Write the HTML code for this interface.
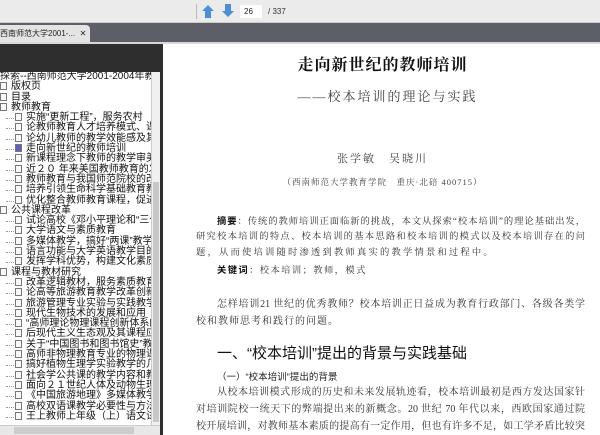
<!DOCTYPE html>
<html><head><meta charset="utf-8"><style>
*{margin:0;padding:0;box-sizing:border-box}
body{width:600px;height:435px;overflow:hidden;background:#fff;position:relative;font-family:"Liberation Sans","Noto Sans CJK SC",sans-serif}
.tb{position:absolute;left:0;top:0;width:600px;height:23px;background:#ebebeb;border-bottom:1px solid #ccc}
.sep{position:absolute;left:196px;top:4px;width:1px;height:15px;background:#bbb}
.pg{position:absolute;left:240px;top:5px;width:22px;height:13px;background:#fff;font-size:8px;line-height:13px;padding-left:4px;color:#222}
.tot{position:absolute;left:268px;top:5px;font-size:8px;line-height:13px;color:#333}
.bar{position:absolute;left:0;top:23px;width:600px;height:19px;background:#5e5e66}
.tab{position:absolute;left:0;top:25px;width:90px;height:18px;background:#e4e4e4;font-size:8px;line-height:18px;color:#222;white-space:nowrap;overflow:hidden;border-radius:0 4px 0 0}
.line{position:absolute;left:0;top:42px;width:600px;height:2px;background:#d8d8d8}
.lp{position:absolute;left:0;top:44px;width:163px;height:391px;background:#2e2e2e}
.col{position:absolute;left:150px;top:54px;width:7px;height:8px;background:#666}
.list{position:absolute;left:0;top:72px;width:160px;height:363px;background:#fff;overflow:hidden}
.vs{position:absolute;left:151px;top:72px;width:9px;height:354px;background:#f0f0f0;border-left:1px solid #ccc}
.hs{position:absolute;left:0;top:425px;width:160px;height:10px;background:#e8e8e8;border-top:1px solid #ccc}
.row{height:10.3px;font-size:10px;line-height:10.3px;white-space:nowrap;color:#111;position:relative}
.row i{display:inline-block;width:7px;height:8px;border:1px solid #777;background:#f8f8f8;margin-right:4px;vertical-align:-1px}
.c{padding-left:15px}
.c::before{content:"";position:absolute;left:6px;top:5px;width:8px;border-top:1px dotted #999}
.doc{position:absolute;left:165px;top:44px;width:435px;height:391px;font-family:"Liberation Serif","Noto Serif CJK SC",serif;color:#222}
.t{position:absolute;left:0;width:435px;text-align:center;white-space:nowrap}
.l{position:absolute;left:31px;width:389px;white-space:nowrap;text-align:justify;text-align-last:justify;color:#333;font-size:10px;height:14px;line-height:14px}
.l.in{left:52px;width:368px}
.s{font-size:9.3px}
b{font-family:"Liberation Sans","Noto Sans CJK SC",sans-serif;color:#111}
</style></head><body>
<div class="tb"><div class="sep"></div>
<svg style="position:absolute;left:201px;top:4px" width="14" height="15"><path d="M7 1 L13 7 L10 7 L10 14 L4 14 L4 7 L1 7 Z" fill="#4a8fd8"/></svg>
<svg style="position:absolute;left:221px;top:3px" width="14" height="15"><path d="M4 1 L10 1 L10 8 L13 8 L7 14 L1 8 L4 8 Z" fill="#4a8fd8"/></svg>
<div class="pg">26</div><div class="tot">/ 337</div></div>
<div class="bar"></div>
<div class="tab">西南师范大学2001-... &nbsp;✕</div>
<div class="line"></div>
<div class="lp"><div class="col"></div></div>
<div class="list">
<div class="row">探索--西南师范大学2001-2004年教学</div>
<div class="row"><i></i>版权页</div>
<div class="row"><i></i>目录</div>
<div class="row"><i></i>教师教育</div>
<div class="row c"><i></i>实施“更新工程”，服务农村</div>
<div class="row c"><i></i>论教师教育人才培养模式、课程</div>
<div class="row c"><i></i>论幼儿教师的教学效能感及其培</div>
<div class="row c"><i style="background:#6060c0"></i>走向新世纪的教师培训</div>
<div class="row c"><i></i>新课程理念下教师的教学审美能</div>
<div class="row c"><i></i>近２０ 年来美国教师教育的发</div>
<div class="row c"><i></i>教师教育与我国师范院校的改革</div>
<div class="row c"><i></i>培养引领生命科学基础教育教师</div>
<div class="row c"><i></i>优化整合教师教育课程，促进学</div>
<div class="row"><i></i>公共课程改革</div>
<div class="row c"><i></i>试论高校《邓小平理论和“三个</div>
<div class="row c"><i></i>大学语文与素质教育</div>
<div class="row c"><i></i>多媒体教学，搞好“两课”教学</div>
<div class="row c"><i></i>语言功能与大学英语教学目的的</div>
<div class="row c"><i></i>发挥学科优势，构建文化素质教</div>
<div class="row"><i></i>课程与教材研究</div>
<div class="row c"><i></i>改革逻辑教材，服务素质教育</div>
<div class="row c"><i></i>论高等旅游教育教学改革创新</div>
<div class="row c"><i></i>旅游管理专业实验与实践教学体</div>
<div class="row c"><i></i>现代生物技术的发展和应用</div>
<div class="row c"><i></i>“高师理论物理课程创新体系的</div>
<div class="row c"><i></i>后现代主义生态观及其课程应用</div>
<div class="row c"><i></i>关于“中国图书和图书馆史”教</div>
<div class="row c"><i></i>高师非物理教育专业的物理课程</div>
<div class="row c"><i></i>搞好植物生理学实验教学的几点</div>
<div class="row c"><i></i>社会学公共课的教学内容和教材</div>
<div class="row c"><i></i>面向２１世纪人体及动物生理学</div>
<div class="row c"><i></i>《中国旅游地理》多媒体教学软</div>
<div class="row c"><i></i>高校双语课教学必要性与方法论</div>
<div class="row c"><i></i>王上教师上年级（上）语文试验</div>
</div>
<div class="vs"><div style="position:absolute;left:1px;top:110px;width:6px;height:240px;background:#c8c8c8"></div></div>
<div class="hs"><div style="position:absolute;left:14px;top:1px;width:120px;height:7px;background:#ccc"></div></div>
<div class="doc">
<div class="t" style="top:8px;font-size:16px;font-weight:bold;color:#111;letter-spacing:1px">走向新世纪的教师培训</div>
<div class="t" style="top:42px;font-size:13px;color:#444;letter-spacing:2px;left:5px">——校本培训的理论与实践</div>
<div class="t" style="top:106px;font-size:11px;color:#444;letter-spacing:2px">张学敏　吴晓川</div>
<div class="t" style="top:132px;font-size:8.5px;color:#444;letter-spacing:1px">（西南师范大学教育学院　重庆·北碚 400715）</div>
<div class="l in s" style="top:170px"><b>摘要</b>：传统的教师培训正面临新的挑战，本文从探索“校本培训”的理论基础出发，</div>
<div class="l s" style="top:186px">研究校本培训的特点、校本培训的基本思路和校本培训的模式以及校本培训存在的问</div>
<div class="l s" style="top:202px;text-align-last:left;letter-spacing:2.2px">题，从而使培训随时渗透到教师真实的教学情景和过程中。</div>
<div class="l in s" style="top:219px;text-align-last:left;letter-spacing:1.4px"><b>关键词</b>：校本培训；教师，模式</div>
<div class="l in" style="top:254px">怎样培训21 世纪的优秀教师？校本培训正日益成为教育行政部门、各级各类学</div>
<div class="l" style="top:271px;text-align-last:left;letter-spacing:1px">校和教师思考和践行的问题。</div>
<div style="position:absolute;left:52px;top:298px;font-size:15px;font-family:'Liberation Sans','Noto Sans CJK SC',sans-serif;color:#111;white-space:nowrap">一、“校本培训”提出的背景与实践基础</div>
<div style="position:absolute;left:52px;top:325px;font-size:9.5px;font-family:'Liberation Sans','Noto Sans CJK SC',sans-serif;color:#222;white-space:nowrap">（一）“校本培训”提出的背景</div>
<div class="l in" style="top:342px">从校本培训模式形成的历史和未来发展轨迹看，校本培训最初是西方发达国家针</div>
<div class="l" style="top:359px">对培训院校一统天下的弊端提出来的新概念。20 世纪 70 年代以来，西欧国家通过院</div>
<div class="l" style="top:376px">校开展培训，对教师基本素质的提高有一定作用，但也有许多不足，如工学矛盾比较突</div>
</div>
</body></html>
